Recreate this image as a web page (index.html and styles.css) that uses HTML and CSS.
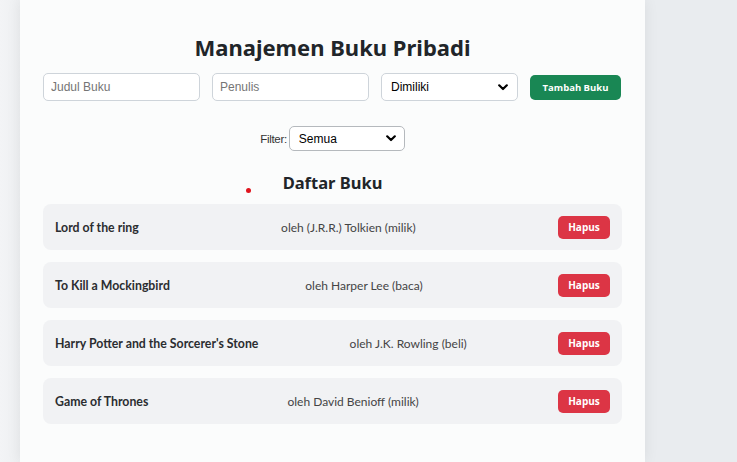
FILE: index.html
```html
<!DOCTYPE html>
<html lang="id">
<head>
<meta charset="utf-8">
<title>Manajemen Buku Pribadi</title>
<link rel="stylesheet" href="styles.css">
</head>
<body>
<div class="page">
  <main class="card">
    <h1 class="title">Manajemen Buku Pribadi</h1>
    <form class="add-form">
      <input class="field" type="text" placeholder="Judul Buku">
      <input class="field" type="text" placeholder="Penulis">
      <div class="select-wrap">
        <select class="field select">
          <option>Dimiliki</option>
        </select>
        <svg class="chev" width="10" height="7" viewBox="0 0 10 7"><path d="M1.2 1.3 L5 5 L8.8 1.3" fill="none" stroke="#000" stroke-width="2.2" stroke-linecap="round" stroke-linejoin="round"/></svg>
      </div>
      <button type="button" class="btn btn-add">Tambah Buku</button>
    </form>
    <div class="filter">
      <label class="filter-label">Filter:</label>
      <div class="select-wrap">
        <select class="filter-select">
          <option>Semua</option>
        </select>
        <svg class="chev chev-filter" width="10" height="7" viewBox="0 0 10 7"><path d="M1.2 1.3 L5 5 L8.8 1.3" fill="none" stroke="#000" stroke-width="2.2" stroke-linecap="round" stroke-linejoin="round"/></svg>
      </div>
    </div>
    <h2 class="subtitle">Daftar Buku</h2>
    <span class="dot"></span>
    <ul class="list">
      <li class="item"><span class="item-title">Lord of the ring</span><span class="item-author">oleh (J.R.R.) Tolkien (milik)</span><button type="button" class="btn btn-del">Hapus</button></li>
      <li class="item"><span class="item-title">To Kill a Mockingbird</span><span class="item-author">oleh Harper Lee (baca)</span><button type="button" class="btn btn-del">Hapus</button></li>
      <li class="item"><span class="item-title">Harry Potter and the Sorcerer's Stone</span><span class="item-author">oleh J.K. Rowling (beli)</span><button type="button" class="btn btn-del">Hapus</button></li>
      <li class="item"><span class="item-title">Game of Thrones</span><span class="item-author">oleh David Benioff (milik)</span><button type="button" class="btn btn-del">Hapus</button></li>
    </ul>
  </main>
</div>
</body>
</html>
```
FILE: styles.css
```css
* { box-sizing: border-box; }
html, body {
  margin: 0;
  height: 100%;
}
body {
  background: #e9ecef;
  overflow: hidden;
}
.page {
  height: 462px;
  padding-left: 20px;
  background: linear-gradient(to right, #f3f4f6 0, #eef0f2 20px, #e9ecef 20px);
}
.card {
  position: relative;
  width: 625px;
  height: 462px;
  background: #fbfcfc;
  box-shadow: 0 0 14px rgba(0, 0, 0, 0.07);
  padding: 33px 23px 0 23px;
  font-family: "Open Sans", sans-serif;
}
.title {
  margin: 0 0 11px;
  text-align: center;
  font-family: "Noto Sans", sans-serif;
  font-weight: 700;
  font-size: 22px;
  line-height: 29px;
  color: #212529;
}
.add-form {
  display: flex;
  align-items: center;
  gap: 12px;
}
.field {
  width: 157px;
  height: 28px;
  border: 1px solid #ced4da;
  border-radius: 5px;
  background: #fff;
  padding: 0 7px;
  font-family: "Liberation Sans", Arial, sans-serif;
  font-size: 12px;
  color: #000;
}
.field::placeholder { color: #757575; }
.select-wrap {
  position: relative;
  display: flex;
}
.select {
  width: 137px;
  padding: 0 9px;
  font-size: 12px;
  appearance: none;
  -webkit-appearance: none;
}
.chev {
  position: absolute;
  right: 10px;
  top: 11px;
  pointer-events: none;
}
.chev-filter {
  right: 9px;
  top: 9px;
}
.btn {
  border: none;
  color: #fff;
  font-family: "Open Sans", sans-serif;
  font-weight: 700;
  cursor: pointer;
}
.btn-add {
  width: 91px;
  height: 25px;
  border-radius: 5px;
  background: #198754;
  font-size: 9.5px;
  padding: 0;
}
.filter {
  display: flex;
  justify-content: center;
  align-items: center;
  gap: 2px;
  margin-top: 25px;
}
.filter-label {
  font-family: "Liberation Sans", Arial, sans-serif;
  font-size: 11.5px;
  letter-spacing: -0.3px;
  color: #333;
}
.filter-select {
  width: 116px;
  height: 25px;
  border: 1px solid #b5b9bd;
  border-radius: 5px;
  background: #fff;
  padding: 0 9px;
  font-family: "Liberation Sans", Arial, sans-serif;
  font-size: 12px;
  color: #000;
  appearance: none;
  -webkit-appearance: none;
}
.subtitle {
  margin: 21px 0 10px;
  text-align: center;
  font-family: "Noto Sans", sans-serif;
  font-weight: 700;
  font-size: 16.5px;
  line-height: 22px;
  color: #212529;
}
.dot {
  position: absolute;
  left: 226px;
  top: 188px;
  width: 5px;
  height: 5px;
  border-radius: 50%;
  background: #e0141e;
}
.list {
  list-style: none;
  margin: 0;
  padding: 0;
  display: flex;
  flex-direction: column;
  gap: 12px;
}
.item {
  display: flex;
  justify-content: space-between;
  align-items: center;
  height: 46px;
  padding: 0 12px;
  background: #f1f2f4;
  border-radius: 8px;
  font-family: "Lato", sans-serif;
  font-size: 12px;
  color: #333;
}
.item-title { font-weight: 700; font-size: 12.3px; color: #2b2d30; }
.item-author { color: #444; }
.btn-del {
  width: 52px;
  height: 23px;
  border-radius: 5px;
  background: #dc3545;
  font-size: 10px;
  padding: 0;
}
```
